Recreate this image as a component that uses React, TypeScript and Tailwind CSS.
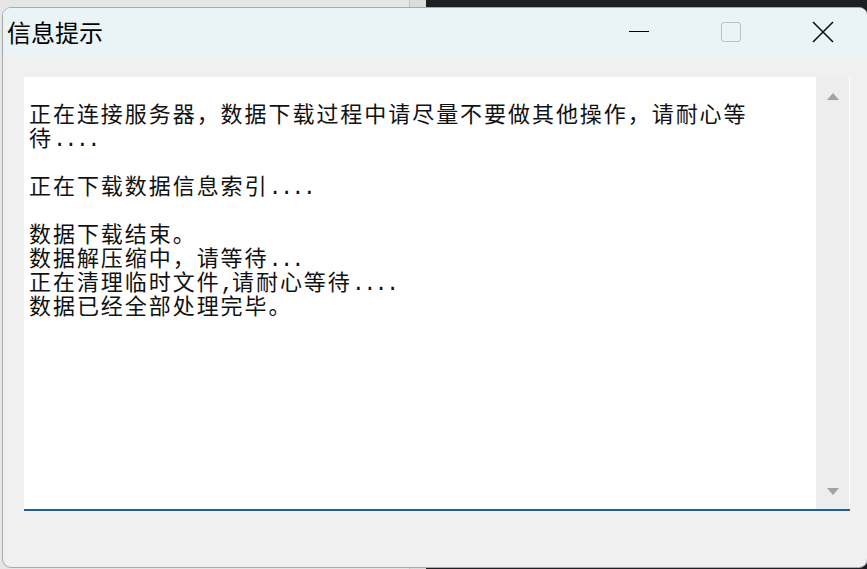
import React from "react";

function Run({ s }: { s: string }) {
  const parts = s.match(/[\x00-\x7f]+|[^\x00-\x7f]+/g) || [];
  return (
    <>
      {parts.map((p, i) =>
        /^[\x00-\x7f]+$/.test(p) ? (
          <span key={i} className="tracking-[-1.8px]">
            {p}
          </span>
        ) : (
          <span key={i} className="tracking-[1.95px]">
            {p}
          </span>
        )
      )}
    </>
  );
}

const lines = [
  "正在连接服务器，数据下载过程中请尽量不要做其他操作，请耐心等",
  "待....",
  "",
  "正在下载数据信息索引....",
  "",
  "数据下载结束。",
  "数据解压缩中，请等待...",
  "正在清理临时文件,请耐心等待....",
  "数据已经全部处理完毕。",
];

export default function App() {
  return (
    <div className="relative w-[867px] h-[569px] overflow-hidden flex">
      <div className="w-[409px] bg-[#e6e6e6]" />
      <div className="w-[1px] bg-[#c4c4c4]" />
      <div className="w-[16px] bg-[#dcdcdc]" />
      <div className="flex-1 bg-[#1e1f22]" />

      <div className="absolute left-[2px] top-[7px] w-[866px] h-[561px] rounded-[9px] border border-[#a9a9a9] bg-[#f0f0f0] overflow-hidden flex flex-col">
        <div className="h-[47px] bg-[#eaf4f7] flex items-center shrink-0">
          <div className="pl-[4px] text-[24px] leading-none text-black font-['Noto_Sans_CJK_SC',sans-serif]">
            信息提示
          </div>
          <div className="ml-auto -mr-[2px] flex h-full">
            <div className="w-[92px] h-full flex items-center justify-center">
              <div className="w-[20px] h-[1.5px] bg-black" />
            </div>
            <div className="w-[92px] h-full flex items-center justify-center">
              <div className="w-[20px] h-[20px] rounded-[3px] border-[1.5px] border-[#c2c2c2]" />
            </div>
            <div className="w-[92px] h-full flex items-center justify-center">
              <svg width="22" height="22" viewBox="0 0 22 22">
                <path d="M1 1 L21 21 M21 1 L1 21" stroke="#111" strokeWidth="1.6" fill="none" />
              </svg>
            </div>
          </div>
        </div>

        <div className="flex-1 pl-[21px] pt-[22px] pr-[17px]">
          <div className="h-[434px] flex bg-white border-b-2 border-[#235e8c]">
            <div className="flex-1 pl-[5px] pt-[28px] text-[22px] leading-[24px] text-[#111] font-['Liberation_Mono','Noto_Sans_CJK_SC',monospace] whitespace-pre">
              {lines.map((l, i) => (
                <div key={i} className="h-[24px]">
                  <Run s={l} />
                </div>
              ))}
            </div>
            <div className="w-[34px] bg-[#ededed] flex flex-col items-center justify-between pt-[16px] pb-[14px] border-r border-white">
              <svg width="12" height="7" viewBox="0 0 12 7">
                <path d="M6 0 L12 7 L0 7 Z" fill="#a3a3a3" />
              </svg>
              <svg width="12" height="7" viewBox="0 0 12 7">
                <path d="M0 0 L12 0 L6 7 Z" fill="#a3a3a3" />
              </svg>
            </div>
          </div>
        </div>
      </div>
    </div>
  );
}
